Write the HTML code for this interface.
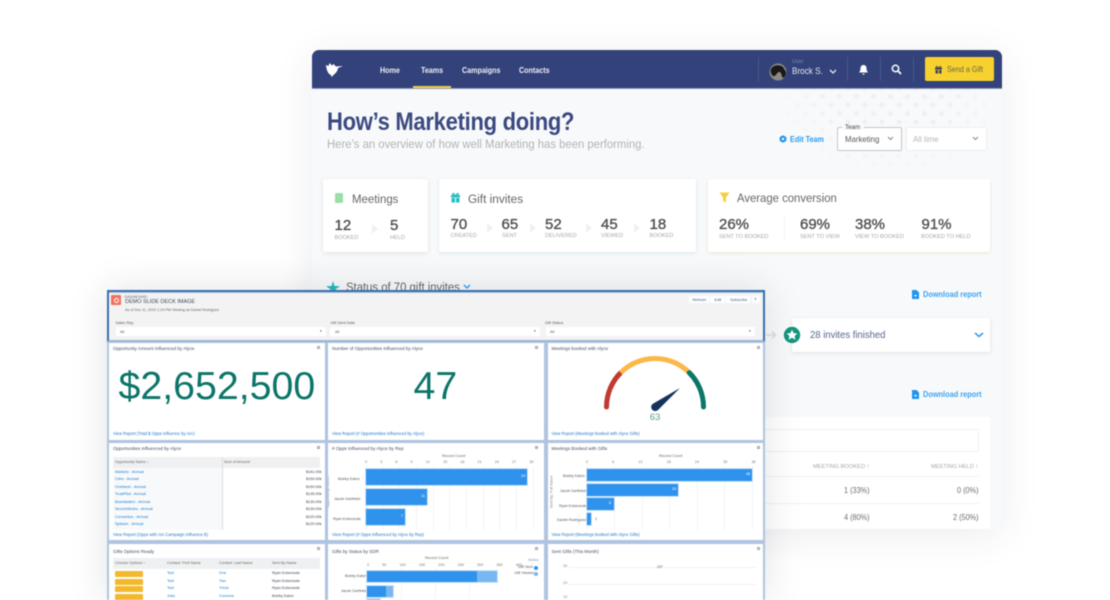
<!DOCTYPE html>
<html lang="en"><head><meta charset="utf-8"><title>Marketing dashboard</title>
<style>
html,body{margin:0;padding:0;width:1110px;height:600px;overflow:hidden;background:#fff}
body{position:relative;font-family:"Liberation Sans",sans-serif}
#w{position:absolute;left:0;top:0;width:1110px;height:600px;overflow:hidden;filter:blur(.4px)}
.t{position:absolute;white-space:nowrap;line-height:1;transform-origin:0 50%}
.b{position:absolute;box-sizing:border-box}
.card{position:absolute;background:#fff;border-radius:2px;box-shadow:0 1px 4px rgba(40,50,80,.12)}
.n{position:absolute;white-space:nowrap;line-height:1;font-size:15px;color:#4f4f4f;-webkit-text-stroke:.35px #4f4f4f}
.l{position:absolute;white-space:nowrap;line-height:1;font-size:5.6px;color:#a5a8ab}
.nav{position:absolute;top:66px;font-size:8.5px;font-weight:700;color:#eef0f6;line-height:1;white-space:nowrap;transform:scaleX(.84);transform-origin:0 50%}
.sf{position:absolute;background:#fff;overflow:hidden}
.st{position:absolute;left:5px;top:4px;font-size:4.6px;color:#444c5e;white-space:nowrap;line-height:1}
.lk{position:absolute;font-size:4.2px;color:#1b78d0;white-space:nowrap;line-height:1}
.x{position:absolute;width:3px;height:3px;border:.5px solid #aaa;background:#ddd;box-sizing:border-box}
.tl{position:absolute;font-size:3.8px;line-height:1;white-space:nowrap;color:#3a3f4a}
.a{color:#1b78d0}
.bar{position:absolute;background:#2f92ec;box-shadow:0 0 0 1px #cfe5fa}
.lt{background:#78b7f2}
.gl{position:absolute;width:1px;background:#f3f4f6}
.h3{font-size:12.300px;color:#63666a}
.dl{font-size:8.200px;font-weight:700;color:#3ba3f1;transform:scaleX(.9)}
</style></head><body><div id="w">

<!-- main panel -->
<div class="b" style="left:312px;top:50px;width:690px;height:479px;background:#f8f9fa;border-radius:7px;box-shadow:0 6px 40px rgba(40,50,80,.09)"></div>
<div class="b" style="left:780px;top:88px;width:222px;height:85px;opacity:.75;background-image:radial-gradient(circle,#eceef0 2.2px,transparent 2.8px),radial-gradient(circle,#eceef0 2.2px,transparent 2.8px);background-size:17px 17px;background-position:0 0,8.500px 8.500px;-webkit-mask-image:radial-gradient(ellipse 115px 80px at 110px 10px,#000 50%,transparent 100%)"></div>
<div class="b" style="left:312px;top:50px;width:690px;height:38.500px;background:#33427a;border-radius:7px 7px 0 0;border-bottom:1px solid #8f99b8"></div>

<svg class="b" style="left:325px;top:62px" width="18" height="16" viewBox="0 0 18 16"><path d="M1 3l2.500 1L4.500 1 7 3.500 8.500 2 11 4.500l7-.5-5 2c-.5 3-2 5-4 6.500L6.500 15 6 13C3 12 1.500 8 1 3z" fill="#fff"/></svg>
<div class="nav" style="left:380px">Home</div>
<div class="nav" style="left:420.500px">Teams</div>
<div class="nav" style="left:462px">Campaigns</div>
<div class="nav" style="left:519px">Contacts</div>
<div class="b" style="left:413px;top:86px;width:38px;height:2px;background:#f2cf4a"></div>
<div class="b" style="left:758px;top:57px;width:1px;height:24px;background:#4a5789"></div>
<div class="b" style="left:847px;top:57px;width:1px;height:24px;background:#4a5789"></div>
<div class="b" style="left:880px;top:57px;width:1px;height:24px;background:#4a5789"></div>
<div class="b" style="left:913px;top:57px;width:1px;height:24px;background:#4a5789"></div>
<svg class="b" style="left:769px;top:63px" width="18" height="18" viewBox="0 0 18 18"><circle cx="9" cy="9" r="8.500" fill="#8b8b84"/><path d="M2 6c2-4 8-5 12-2l3 5c0 3-1 5-3 6-2-2-1-6-4-6-3 1-3 5-6 4C2 11 1 8 2 6z" fill="#191919"/></svg>
<div class="t" style="left:792px;top:59.500px;font-size:5.500px;color:#8089ad">User</div>
<div class="t" style="left:792px;top:67px;font-size:9.500px;color:#e4e7f0;transform:scaleX(.86)">Brock S.</div>
<svg class="b" style="left:829px;top:69px" width="8" height="6" viewBox="0 0 8 6"><path d="M1 1l3 3 3-3" fill="none" stroke="#e4e7f0" stroke-width="1.300"/></svg>
<svg class="b" style="left:858px;top:64px" width="11" height="12" viewBox="0 0 11 12"><path d="M5.500 1C3.500 1 2.500 2.500 2.500 4.500c0 2-.7 3-1.500 4h9c-.8-1-1.500-2-1.500-4C8.500 2.500 7.500 1 5.500 1zM4.300 9.500a1.200 1.200 0 0 0 2.400 0z" fill="#fff"/></svg>
<svg class="b" style="left:891px;top:64px" width="11" height="11" viewBox="0 0 11 11"><circle cx="4.500" cy="4.500" r="3.200" fill="none" stroke="#fff" stroke-width="1.500"/><path d="M7 7l3 3" stroke="#fff" stroke-width="1.800"/></svg>
<div class="b" style="left:925px;top:57px;width:69px;height:24px;background:#f6d12f;border-radius:2px"></div>
<svg class="b" style="left:934px;top:65px" width="9" height="9" viewBox="0 0 9 9"><path d="M1 2.500h7v2H1zM1.500 5h2.500v3.500H1.500zM5 5h2.500v3.500H5zM4.500 2.500C3 .5 1.500.5 2 2zM4.500 2.500C6 .5 7.500.5 7 2z" fill="#3d4252"/></svg>
<div class="t" style="left:947px;top:65.500px;font-size:8.200px;color:#6b6640;transform:scaleX(.88)">Send a Gift</div>

<div class="t" style="left:326.500px;top:110.500px;font-size:24.700px;font-weight:700;color:#3a4981;letter-spacing:-.3px;transform:scaleX(.89)">How’s Marketing doing?</div>
<div class="t" style="left:326.500px;top:138px;font-size:12.200px;color:#b0b3b7;transform:scaleX(.927)">Here’s an overview of how well Marketing has been performing.</div>

<svg class="b" style="left:779px;top:135px" width="8" height="8" viewBox="0 0 8 8"><path d="M4 .3l3.300 1.800v3.800L4 7.700.7 5.900V2.100z" fill="#1f96ee"/><circle cx="4" cy="4" r="1.200" fill="#fff"/></svg>
<div class="t" style="left:790px;top:135px;font-size:8.300px;font-weight:700;color:#2a9bf0;transform:scaleX(.87)">Edit Team</div>
<div class="b" style="left:837px;top:127px;width:65px;height:24px;background:#fff;border:1px solid #c4c6c8;border-radius:2px"></div>
<div class="b" style="left:842px;top:124px;width:22px;height:6px;background:#f8f9fa"></div>
<div class="t" style="left:845px;top:124.500px;font-size:6.200px;color:#444">Team</div>
<div class="t" style="left:845px;top:135px;font-size:8.500px;color:#55585c;transform:scaleX(.92)">Marketing</div>
<svg class="b" style="left:887px;top:136px" width="7" height="5" viewBox="0 0 7 5"><path d="M1 1l2.500 2.500L6 1" fill="none" stroke="#888" stroke-width="1"/></svg>
<div class="b" style="left:906px;top:127px;width:81px;height:24px;background:#fff;border:1px solid #eceef0;border-radius:2px"></div>
<div class="t" style="left:913px;top:135px;font-size:8.500px;color:#b5b7ba;transform:scaleX(.92)">All time</div>
<svg class="b" style="left:972px;top:136px" width="7" height="5" viewBox="0 0 7 5"><path d="M1 1l2.500 2.500L6 1" fill="none" stroke="#888" stroke-width="1"/></svg>

<!-- meetings -->
<div class="card" style="left:323px;top:179px;width:105px;height:73px"></div>
<div class="b" style="left:335px;top:193px;width:8px;height:10px;background:#9adfa8;border-radius:1px"></div>
<div class="t h3" style="left:351.500px;top:192.500px;transform:scaleX(.93)">Meetings</div>
<div class="n" style="left:334.500px;top:217.500px">12</div>
<div class="l" style="left:334.500px;top:235.500px">BOOKED</div>
<div class="n" style="left:390px;top:217.500px">5</div>
<div class="l" style="left:390px;top:235.500px">HELD</div>
<svg class="b" style="left:372px;top:224px" width="6" height="10"><path d="M0 0l6 5-6 5z" fill="#f0f1f3"/></svg>

<!-- gift invites -->
<div class="card" style="left:439px;top:179px;width:257px;height:73px;box-shadow:0 1px 3px rgba(70,170,180,.22)"></div>
<svg class="b" style="left:450px;top:192px" width="11" height="11" viewBox="0 0 11 11"><path d="M1 3h9v2.500H1zM1.500 6h3.500v4.500H1.500zM6 6h3.500v4.500H6zM5.500 3C4 .3 1.500.3 2.300 2.700zM5.500 3C7 .3 9.500.3 8.700 2.700z" fill="#25c0bd"/></svg>
<div class="t h3" style="left:468px;top:192.500px;transform:scaleX(.96)">Gift invites</div>
<div class="n" style="left:450.500px;top:216.500px">70</div>
<div class="l" style="left:450.500px;top:234px">CREATED</div>
<div class="n" style="left:501.500px;top:216.500px">65</div>
<div class="l" style="left:502px;top:234px">SENT</div>
<div class="n" style="left:545px;top:216.500px">52</div>
<div class="l" style="left:545px;top:234px">DELIVERED</div>
<div class="n" style="left:601px;top:216.500px">45</div>
<div class="l" style="left:601px;top:234px">VIEWED</div>
<div class="n" style="left:649.500px;top:216.500px">18</div>
<div class="l" style="left:649.500px;top:234px">BOOKED</div>
<svg class="b" style="left:487px;top:223px" width="6" height="10"><path d="M0 0l6 5-6 5z" fill="#f0f1f3"/></svg>
<svg class="b" style="left:530px;top:223px" width="6" height="10"><path d="M0 0l6 5-6 5z" fill="#f0f1f3"/></svg>
<svg class="b" style="left:586px;top:223px" width="6" height="10"><path d="M0 0l6 5-6 5z" fill="#f0f1f3"/></svg>
<svg class="b" style="left:634px;top:223px" width="6" height="10"><path d="M0 0l6 5-6 5z" fill="#f0f1f3"/></svg>

<!-- conversion -->
<div class="card" style="left:708px;top:179px;width:282px;height:73px;box-shadow:0 1px 3px rgba(200,170,90,.25)"></div>
<svg class="b" style="left:719px;top:192px" width="11" height="11" viewBox="0 0 11 11"><path d="M.5.500h10L7 5.500v5L4 9V5.500z" fill="#f6cf3c"/></svg>
<div class="t h3" style="left:736.500px;top:191.500px;transform:scaleX(.92)">Average conversion</div>
<div class="n" style="left:719px;top:216.500px">26%</div>
<div class="l" style="left:719px;top:234.500px">SENT TO BOOKED</div>
<div class="b" style="left:784px;top:217px;width:1px;height:24px;background:#f0f1f3"></div>
<div class="n" style="left:800px;top:216.500px">69%</div>
<div class="l" style="left:800px;top:234.500px">SENT TO VIEW</div>
<div class="n" style="left:855px;top:216.500px">38%</div>
<div class="l" style="left:855px;top:234.500px">VIEW TO BOOKED</div>
<div class="n" style="left:921.500px;top:216.500px">91%</div>
<div class="l" style="left:921px;top:234.500px">BOOKED TO HELD</div>

<!-- status -->
<svg class="b" style="left:326px;top:281px" width="14" height="14" viewBox="0 0 14 14"><path d="M7 0l1.500 5 5.500.3-4.500 3L11 13.500 7 10.500 3 13.500l1.500-5.200L0 5.300 5.500 5z" fill="#25b9c0"/></svg>
<div class="t h3" style="left:346px;top:280.500px;transform:scaleX(.92)">Status of 70 gift invites</div>
<svg class="b" style="left:463px;top:284px" width="8" height="6" viewBox="0 0 8 6"><path d="M1 1l3 3 3-3" fill="none" stroke="#2a9bf0" stroke-width="1.300"/></svg>

<svg class="b" style="left:912px;top:290px" width="7" height="9" viewBox="0 0 7 9"><path d="M0 0h4.500L7 2.500V9H0z" fill="#1f96ee"/><path d="M2 5h3L3.500 7z" fill="#fff"/></svg>
<div class="t dl" style="left:922.500px;top:290.500px">Download report</div>
<svg class="b" style="left:912px;top:390px" width="7" height="9" viewBox="0 0 7 9"><path d="M0 0h4.500L7 2.500V9H0z" fill="#1f96ee"/><path d="M2 5h3L3.500 7z" fill="#fff"/></svg>
<div class="t dl" style="left:922.500px;top:390.500px">Download report</div>

<div class="card" style="left:792px;top:318px;width:198px;height:34px"></div>
<svg class="b" style="left:766px;top:330px" width="11" height="10" viewBox="0 0 11 10"><path d="M0 5h9M6 1.500L9.500 5 6 8.500" fill="none" stroke="#d8dadc" stroke-width="1.300"/></svg>
<svg class="b" style="left:782px;top:325px" width="20" height="20" viewBox="0 0 20 20"><circle cx="10" cy="10" r="9.500" fill="#fff"/><circle cx="10" cy="10" r="8.200" fill="#14967f"/><path d="M10 4.600l1.600 3.500 3.800.4-2.800 2.500.8 3.700L10 12.800l-3.400 1.900.8-3.700-2.800-2.500 3.800-.4z" fill="#fff"/></svg>
<div class="t" style="left:809.500px;top:330.500px;font-size:10.100px;color:#5b6690;transform:scaleX(.94)">28 invites finished</div>
<svg class="b" style="left:974px;top:332px" width="10" height="6" viewBox="0 0 10 6"><path d="M1 1l4 3.500L9 1" fill="none" stroke="#2a9bf0" stroke-width="1.500"/></svg>

<!-- table panel -->
<div class="b" style="left:760px;top:417px;width:230px;height:112px;background:#fff"></div>
<div class="b" style="left:760px;top:429px;width:219px;height:23px;background:#fff;border:1px solid #eef0f2;border-radius:2px"></div>
<div class="t" style="left:812.500px;top:464.500px;font-size:5.900px;color:#a5a8ab;transform:scaleX(.97)">MEETING BOOKED ↑</div>
<div class="t" style="left:931px;top:464.500px;font-size:5.900px;color:#a5a8ab;transform:scaleX(.97)">MEETING HELD ↑</div>
<div class="b" style="left:760px;top:476px;width:219px;height:1px;background:#f0f1f3"></div>
<div class="b" style="left:760px;top:503px;width:219px;height:1px;background:#f0f1f3"></div>
<div class="t" style="left:844px;top:486px;font-size:8.300px;color:#6a6d71;transform:scaleX(.88)">1 (33%)</div>
<div class="t" style="left:957px;top:486px;font-size:8.300px;color:#6a6d71;transform:scaleX(.88)">0 (0%)</div>
<div class="t" style="left:844px;top:513px;font-size:8.300px;color:#6a6d71;transform:scaleX(.88)">4 (80%)</div>
<div class="t" style="left:953px;top:513px;font-size:8.300px;color:#6a6d71;transform:scaleX(.88)">2 (50%)</div>

<!-- salesforce panel -->
<div class="b" style="left:107px;top:290px;width:658px;height:310px;background:#afc4e1;box-shadow:0 0 36px rgba(30,40,60,.13)"></div>
<div class="b" style="left:107px;top:290px;width:658px;height:52px;border:2px solid #3a6fae;border-bottom-color:#9db5d8"></div>
<div class="b" style="left:109px;top:293px;width:654px;height:47px;background:#f3f3f3"></div>
<div class="b" style="left:111px;top:295px;width:10px;height:10px;background:#f2705e;border-radius:1px"></div>
<div class="b" style="left:113.500px;top:297.500px;width:5px;height:5px;border:1px solid #fff;border-radius:50%"></div>
<div class="t" style="left:124.500px;top:295.500px;font-size:3.600px;color:#62666e">DASHBOARD</div>
<div class="t" style="left:124.500px;top:299.500px;font-size:5.800px;color:#3d4659;transform:scaleX(.95)">DEMO SLIDE DECK IMAGE</div>
<div class="t" style="left:125px;top:308.500px;font-size:3.700px;color:#62666e">As of Dec 11, 2019 1:24 PM·Viewing as Daniel Rodriguez</div>
<div class="b" style="left:689px;top:296px;width:20px;height:7px;background:#fff"></div>
<div class="t" style="left:692.500px;top:297.500px;font-size:3.900px;color:#2c5a94">Refresh</div>
<div class="b" style="left:710px;top:296px;width:15px;height:7px;background:#fff"></div>
<div class="t" style="left:714.500px;top:297.500px;font-size:3.900px;color:#2c5a94">Edit</div>
<div class="b" style="left:726px;top:296px;width:24px;height:7px;background:#fff"></div>
<div class="t" style="left:730px;top:297.500px;font-size:3.900px;color:#2c5a94">Subscribe</div>
<div class="b" style="left:752px;top:296px;width:8px;height:7px;background:#fff"></div>
<div class="t" style="left:754.500px;top:297.500px;font-size:3.500px;color:#2c5a94">▾</div>
<div class="t" style="left:115.500px;top:321px;font-size:3.900px;color:#555a64">Sales Rep</div>
<div class="t" style="left:330.500px;top:321px;font-size:3.900px;color:#555a64">Gift Sent Date</div>
<div class="t" style="left:545px;top:321px;font-size:3.900px;color:#555a64">Gift Status</div>
<div class="b" style="left:116px;top:327px;width:210px;height:9px;background:#fff"></div>
<div class="b" style="left:330px;top:327px;width:210px;height:9px;background:#fff"></div>
<div class="b" style="left:546px;top:327px;width:209px;height:9px;background:#fff"></div>
<div class="t" style="left:120px;top:330px;font-size:3.900px;color:#555a64">All</div>
<div class="t" style="left:335px;top:330px;font-size:3.900px;color:#555a64">All</div>
<div class="t" style="left:550px;top:330px;font-size:3.900px;color:#555a64">All</div>
<div class="t" style="left:320px;top:330px;font-size:3.500px;color:#555a64">▾</div>
<div class="t" style="left:534px;top:330px;font-size:3.500px;color:#555a64">▾</div>
<div class="t" style="left:749px;top:330px;font-size:3.500px;color:#555a64">▾</div>

<!-- row 1 -->
<div class="sf" style="left:109px;top:343px;width:216px;height:97px">
  <div class="st" style="left:4px">Opportunity Amount Influenced by Alyce</div><div class="x" style="left:208px;top:3px"></div>
  <div class="t" style="left:9.500px;top:23.500px;font-size:39.300px;color:#0b7568">$2,652,500</div>
  <div class="lk" style="left:4px;top:88.500px">View Report (Total $ Opps Influence by AIA)</div>
</div>
<div class="sf" style="left:328px;top:343px;width:216px;height:97px">
  <div class="st" style="left:4px">Number of Opportunities Influenced by Alyce</div><div class="x" style="left:207px;top:3px"></div>
  <div class="t" style="left:85.500px;top:23.500px;font-size:39.300px;color:#0b7568">47</div>
  <div class="lk" style="left:4px;top:88.500px">View Report (# Opportunities Influenced by Alyce)</div>
</div>
<div class="sf" style="left:548px;top:343px;width:215px;height:97px">
  <div class="st" style="left:3.500px">Meetings booked with Alyce</div><div class="x" style="left:209px;top:3px"></div>
  <svg style="position:absolute;left:0;top:0" width="215" height="97" viewBox="548 343 215 97">
    <path d="M606.500 407A48.500 48.500 0 0 1 620.700 372.700" fill="none" stroke="#bf3a30" stroke-width="5" stroke-linecap="round"/>
    <path d="M620.700 372.700A48.500 48.500 0 0 1 689.300 372.700" fill="none" stroke="#fbb848" stroke-width="5"/>
    <path d="M689.300 372.700A48.500 48.500 0 0 1 703.500 407" fill="none" stroke="#0c7668" stroke-width="5" stroke-linecap="round"/>
    <path d="M652.500 404L680 388 658 410A4 4 0 0 1 652.500 404z" fill="#16325c"/>
    <text x="655" y="420" text-anchor="middle" font-size="9.500" fill="#4f9f96" font-family="Liberation Sans">63</text>
  </svg>
  <div class="lk" style="left:3.500px;top:88.500px">View Report (Meetings booked with Alyce Gifts)</div>
</div>

<!-- row 2 -->
<div class="sf" style="left:109px;top:443px;width:216px;height:97px">
  <div class="st" style="left:4px">Opportunities Influenced by Alyce</div><div class="x" style="left:208px;top:3px"></div>
  <div class="b" style="left:4px;top:25px;width:109px;height:62px;background:#f7f9fb"></div>
  <div class="b" style="left:4px;top:14px;width:207px;height:11px;background:#eff0f1"></div>
  <div class="b" style="left:113px;top:14px;width:1px;height:73px;background:#dcdee0"></div>
  <div class="tl" style="left:6px;top:18px;color:#666">Opportunity Name ↓</div>
  <div class="tl" style="left:115px;top:18px;color:#666">Sum of Amount</div>
  <div class="tl a" style="left:6px;top:27.500px">Marketo - Annual</div><div class="tl" style="left:197px;top:27.500px">$161.00k</div>
  <div class="tl a" style="left:6px;top:35px">Citrix - Annual</div><div class="tl" style="left:197px;top:35px">$150.00k</div>
  <div class="tl a" style="left:6px;top:42.500px">OneNeck - Annual</div><div class="tl" style="left:197px;top:42.500px">$150.00k</div>
  <div class="tl a" style="left:6px;top:50px">TrustPilot - Annual</div><div class="tl" style="left:197px;top:50px">$135.00k</div>
  <div class="tl a" style="left:6px;top:57.500px">Brandwatch - Annual</div><div class="tl" style="left:197px;top:57.500px">$130.00k</div>
  <div class="tl a" style="left:6px;top:65px">SecureWorks - Annual</div><div class="tl" style="left:197px;top:65px">$130.00k</div>
  <div class="tl a" style="left:6px;top:72.500px">Convertica - Annual</div><div class="tl" style="left:197px;top:72.500px">$120.00k</div>
  <div class="tl a" style="left:6px;top:80px">Splision - Annual</div><div class="tl" style="left:197px;top:80px">$120.00k</div>
  <div class="lk" style="left:4px;top:90px">View Report (Opps with AIA Campaign Influence B)</div>
</div>
<div class="sf" style="left:328px;top:443px;width:216px;height:97px">
  <div class="st" style="left:4px"># Opps Influenced by Alyce by Rep</div><div class="x" style="left:207px;top:3px"></div>
  <div class="tl" style="left:114px;top:11.500px;color:#666">Record Count</div>
  <div class="tl" style="left:37px;top:18px;color:#777;word-spacing:12px">0 3 6 9 12 15 18 21 24 27 30</div>
  <div class="tl" style="left:10px;top:35px;color:#555">Bobby Eaton</div>
  <div class="tl" style="left:6px;top:54.500px;color:#555">Jacob Garfinkel</div>
  <div class="tl" style="left:5px;top:74.500px;color:#555">Ryan Eckersode</div>
  <div class="tl" style="left:-15px;top:47px;color:#888;transform:rotate(-90deg)">Opportunity Owner</div>
  <div class="gl" style="left:38px;top:23px;height:64px"></div><div class="gl" style="left:55px;top:23px;height:64px"></div><div class="gl" style="left:71px;top:23px;height:64px"></div><div class="gl" style="left:88px;top:23px;height:64px"></div><div class="gl" style="left:105px;top:23px;height:64px"></div><div class="gl" style="left:121px;top:23px;height:64px"></div><div class="gl" style="left:138px;top:23px;height:64px"></div><div class="gl" style="left:155px;top:23px;height:64px"></div><div class="gl" style="left:171px;top:23px;height:64px"></div><div class="gl" style="left:188px;top:23px;height:64px"></div><div class="gl" style="left:205px;top:23px;height:64px"></div>
  <div class="bar" style="left:38px;top:26px;width:161px;height:16px"></div>
  <div class="bar" style="left:38px;top:45.500px;width:61px;height:16px"></div>
  <div class="bar" style="left:38px;top:65.500px;width:39px;height:16px"></div>
  <div class="tl" style="left:193px;top:32px;color:#fff">29</div><div class="tl" style="left:93px;top:52px;color:#fff">11</div><div class="tl" style="left:73px;top:72px;color:#fff">7</div>
  <div class="lk" style="left:4px;top:90px">View Report (# Opps Influenced by Alyce by Rep)</div>
</div>
<div class="sf" style="left:548px;top:443px;width:215px;height:97px">
  <div class="st" style="left:3.500px">Meetings Booked with Gifts</div><div class="x" style="left:209px;top:3px"></div>
  <div class="tl" style="left:111px;top:11.500px;color:#666">Record Count</div>
  <div class="tl" style="left:38px;top:18px;color:#777;word-spacing:23px">0 6 12 18 24 30 36</div>
  <div class="tl" style="left:15px;top:32px;color:#555">Bobby Eaton</div>
  <div class="tl" style="left:12px;top:47px;color:#555">Jacob Garfinkel</div>
  <div class="tl" style="left:11px;top:61.500px;color:#555">Ryan Eckersode</div>
  <div class="tl" style="left:9px;top:76px;color:#555">Daniel Rodriguez</div>
  <div class="tl" style="left:-12px;top:47px;color:#888;transform:rotate(-90deg)">Sent By: Full Name</div>
  <div class="gl" style="left:39px;top:23px;height:64px"></div><div class="gl" style="left:66px;top:23px;height:64px"></div><div class="gl" style="left:94px;top:23px;height:64px"></div><div class="gl" style="left:121px;top:23px;height:64px"></div><div class="gl" style="left:149px;top:23px;height:64px"></div><div class="gl" style="left:176px;top:23px;height:64px"></div><div class="gl" style="left:204px;top:23px;height:64px"></div>
  <div class="bar" style="left:39px;top:26px;width:165px;height:12px"></div>
  <div class="bar" style="left:39px;top:40.500px;width:91px;height:12px"></div>
  <div class="bar" style="left:39px;top:55px;width:27px;height:12px"></div>
  <div class="bar" style="left:39px;top:70px;width:4px;height:12px"></div>
  <div class="tl" style="left:198px;top:30px;color:#fff">36</div><div class="tl" style="left:124px;top:45px;color:#fff">20</div><div class="tl" style="left:61px;top:59px;color:#fff">6</div><div class="tl" style="left:47px;top:74.500px;color:#555">1</div>
  <div class="lk" style="left:3.500px;top:90px">View Report (Meetings booked with Alyce Gifts)</div>
</div>

<!-- row 3 -->
<div class="sf" style="left:109px;top:544px;width:216px;height:56px">
  <div class="st" style="left:4px;top:6px">Gifts Options Ready</div><div class="x" style="left:208px;top:3px"></div>
  <div class="b" style="left:4px;top:14px;width:207px;height:11px;background:#eff0f1"></div>
  <div class="tl" style="left:6px;top:18px;color:#666">Choose Options ↑</div>
  <div class="tl" style="left:58px;top:18px;color:#666">Contact: First Name</div>
  <div class="tl" style="left:110px;top:18px;color:#666">Contact: Last Name</div>
  <div class="tl" style="left:163px;top:18px;color:#666">Sent By Name</div>
  <div class="b" style="left:6px;top:27px;width:28px;height:6px;background:#f2b92e;border-radius:1px"></div>
  <div class="b" style="left:6px;top:34.500px;width:28px;height:6px;background:#f2b92e;border-radius:1px"></div>
  <div class="b" style="left:6px;top:42px;width:28px;height:6px;background:#f2b92e;border-radius:1px"></div>
  <div class="b" style="left:6px;top:49.500px;width:28px;height:6px;background:#f2b92e;border-radius:1px"></div>
  <div class="tl a" style="left:58px;top:28px">Test</div><div class="tl a" style="left:110px;top:28px">One</div><div class="tl" style="left:163px;top:28px">Ryan Eckersode</div>
  <div class="tl a" style="left:58px;top:35.500px">Test</div><div class="tl a" style="left:110px;top:35.500px">Two</div><div class="tl" style="left:163px;top:35.500px">Ryan Eckersode</div>
  <div class="tl a" style="left:58px;top:43px">Test</div><div class="tl a" style="left:110px;top:43px">Three</div><div class="tl" style="left:163px;top:43px">Ryan Eckersode</div>
  <div class="tl a" style="left:58px;top:50.500px">Julia</div><div class="tl a" style="left:110px;top:50.500px">Comcine</div><div class="tl" style="left:163px;top:50.500px">Bobby Eaton</div>
</div>
<div class="sf" style="left:328px;top:544px;width:216px;height:56px">
  <div class="st" style="left:4px;top:6px">Gifts by Status by SDR</div><div class="x" style="left:207px;top:3px"></div>
  <div class="tl" style="left:97px;top:13px;color:#666">Record Count</div>
  <div class="tl" style="left:39px;top:19.500px;color:#777;word-spacing:12px">0 50 100 150 200 250 300 350 400</div>
  <div class="tl" style="left:17px;top:31px;color:#555">Bobby Eaton</div>
  <div class="tl" style="left:13px;top:46px;color:#555">Jacob Garfinkel</div>
  <div class="gl" style="left:73px;top:24px;height:32px"></div><div class="gl" style="left:107px;top:24px;height:32px"></div><div class="gl" style="left:141px;top:24px;height:32px"></div>
  <div class="bar lt" style="left:39px;top:26.500px;width:130px;height:11.500px"></div>
  <div class="bar" style="left:39px;top:26.500px;width:110px;height:11.500px;box-shadow:none"></div>
  <div class="bar lt" style="left:39px;top:41.500px;width:26px;height:11.500px"></div>
  <div class="bar" style="left:39px;top:41.500px;width:19px;height:11.500px;box-shadow:none"></div>
  <div class="bar lt" style="left:39px;top:55px;width:13px;height:3px"></div>
  <div class="tl" style="left:200px;top:14.500px;color:#8a9aa8">Status</div>
  <div class="tl" style="left:190px;top:21.500px;color:#555">Gift Sent</div>
  <div class="tl" style="left:186.500px;top:28px;color:#555">Gift Viewed</div>
  <div class="b" style="left:206px;top:21.500px;width:4px;height:4px;background:#2f92ec;border-radius:50%"></div>
  <div class="b" style="left:206px;top:28px;width:4px;height:4px;background:#78b7f2;border-radius:50%"></div>
</div>
<div class="sf" style="left:548px;top:544px;width:215px;height:56px">
  <div class="st" style="left:3.500px;top:6px">Sent Gifts (This Month)</div><div class="x" style="left:209px;top:3px"></div>
  <div class="tl" style="left:15px;top:21px;color:#888">30</div>
  <div class="tl" style="left:15px;top:37.500px;color:#888">20</div>
  <div class="tl" style="left:15px;top:52px;color:#888">10</div>
  <div class="b" style="left:21px;top:23px;width:187px;height:1px;background:#f0f1f3"></div>
  <div class="b" style="left:21px;top:39.500px;width:187px;height:1px;background:#f0f1f3"></div>
  <div class="tl" style="left:109px;top:21.500px;color:#555">23*</div>
</div>
</div></body></html>
